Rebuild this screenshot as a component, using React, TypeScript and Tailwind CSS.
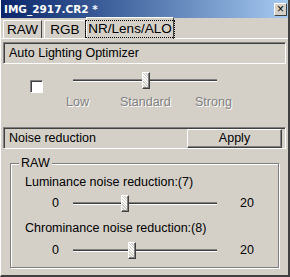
import React from "react";

const font = { fontFamily: '"Liberation Sans", Arial, sans-serif' };

function Slider({ pos }: { pos: number }) {
  return (
    <div className="relative h-[17px] w-[144px]">
      <div className="absolute left-0 right-0 top-[7px] h-[3px] border-t border-t-[#808080] border-b border-b-white bg-[#404040]" />
      <div
        className="absolute top-0 h-[17px] w-[8px] border border-t-white border-l-white border-r-[#404040] border-b-[#404040] bg-[repeating-linear-gradient(45deg,#d4d0c8_0px,#d4d0c8_1px,#ffffff_1px,#ffffff_2px)] shadow-[inset_-1px_-1px_0_#808080]"
        style={{ left: pos }}
      />
    </div>
  );
}

function Tab({ label, w, active }: { label: string; w: string; active?: boolean }) {
  if (active) {
    return (
      <div className={`z-10 -mb-[1px] flex h-[22px] items-center justify-center border border-b-0 border-t-white border-l-white border-r-[#404040] bg-[#d4d0c8] ${w}`}>
        <span className="border border-dotted border-black px-[2px] leading-[16px]">{label}</span>
      </div>
    );
  }
  return (
    <div className={`flex h-[18px] items-center justify-center border border-b-0 border-t-white border-l-white border-r-[#404040] ${w}`}>
      {label}
    </div>
  );
}

export default function App() {
  return (
    <div
      className="flex h-[277px] w-[290px] flex-col border-r-2 border-b-2 border-r-[#404040] border-b-[#404040] border-l border-l-white bg-[#d4d0c8] text-[12.5px] leading-[15px] text-black"
      style={font}
    >
      <div className="flex h-[18px] items-center justify-between bg-gradient-to-r from-[#0a246a] to-[#a6caf0] pl-[3px] pr-[1px]">
        <span className="text-[10.5px] font-bold text-white" style={{ fontFamily: '"DejaVu Sans", Tahoma, sans-serif' }}>
          IMG_2917.CR2 *
        </span>
        <div className="flex h-[13px] w-[13px] items-center justify-center border border-t-white border-l-white border-r-[#404040] border-b-[#404040] bg-[#d4d0c8] text-[12px] leading-none">
          ×
        </div>
      </div>

      <div className="flex h-[20px] items-end pl-[2px] text-[13.5px]">
        <Tab label="RAW" w="w-[39px]" />
        <div className="w-[2px]" />
        <Tab label="RGB" w="w-[42px]" />
        <Tab label="NR/Lens/ALO" w="w-[88px]" active />
      </div>

      <div className="flex flex-1 flex-col border-t border-t-white px-[2px]">
        <div className="mt-[3px] flex h-[22px] items-center border border-t-[#808080] border-l-[#808080] border-r-white border-b-white pl-[5px] shadow-[inset_1px_1px_0_#404040]">
          Auto Lighting Optimizer
        </div>

        <div className="mt-[8px] flex items-start">
          <div className="ml-[27px] mt-[8px] h-[13px] w-[13px] border border-t-[#808080] border-l-[#808080] border-r-white border-b-white bg-white shadow-[inset_1px_1px_0_#404040]" />
          <div className="ml-[30px]">
            <Slider pos={69} />
          </div>
        </div>
        <div className="mt-[2px] flex text-[#808080] [text-shadow:1px_1px_0_#ffffff]">
          <span className="ml-[63px] w-[54px]">Low</span>
          <span className="w-[75px]">Standard</span>
          <span>Strong</span>
        </div>

        <div className="mt-[17px] flex h-[22px] items-center justify-between border border-t-[#808080] border-l-[#808080] border-r-white border-b-white pl-[5px] pr-[3px] shadow-[inset_1px_1px_0_#404040]">
          <span>Noise reduction</span>
          <div className="mt-[1px] flex h-[19px] w-[95px] items-center justify-center border border-t-white border-l-white border-r-[#404040] border-b-[#404040] shadow-[inset_-1px_-1px_0_#808080]">
            Apply
          </div>
        </div>

        <div className="relative mx-[7px] mt-[14px] h-[105px] border border-[#808080] shadow-[1px_1px_0_#ffffff,inset_1px_1px_0_#ffffff]">
          <span className="absolute -top-[8px] left-[8px] bg-[#d4d0c8] px-[2px]">RAW</span>
          <div className="mt-[11px] pl-[14px]">Luminance noise reduction:(7)</div>
          <div className="mt-[5px] flex items-center">
            <span className="ml-[41px] w-[21px]">0</span>
            <Slider pos={48} />
            <span className="ml-[23px]">20</span>
          </div>
          <div className="mt-[9px] pl-[14px]">Chrominance noise reduction:(8)</div>
          <div className="mt-[6px] flex items-center">
            <span className="ml-[41px] w-[21px]">0</span>
            <Slider pos={55} />
            <span className="ml-[23px]">20</span>
          </div>
        </div>
      </div>
    </div>
  );
}
